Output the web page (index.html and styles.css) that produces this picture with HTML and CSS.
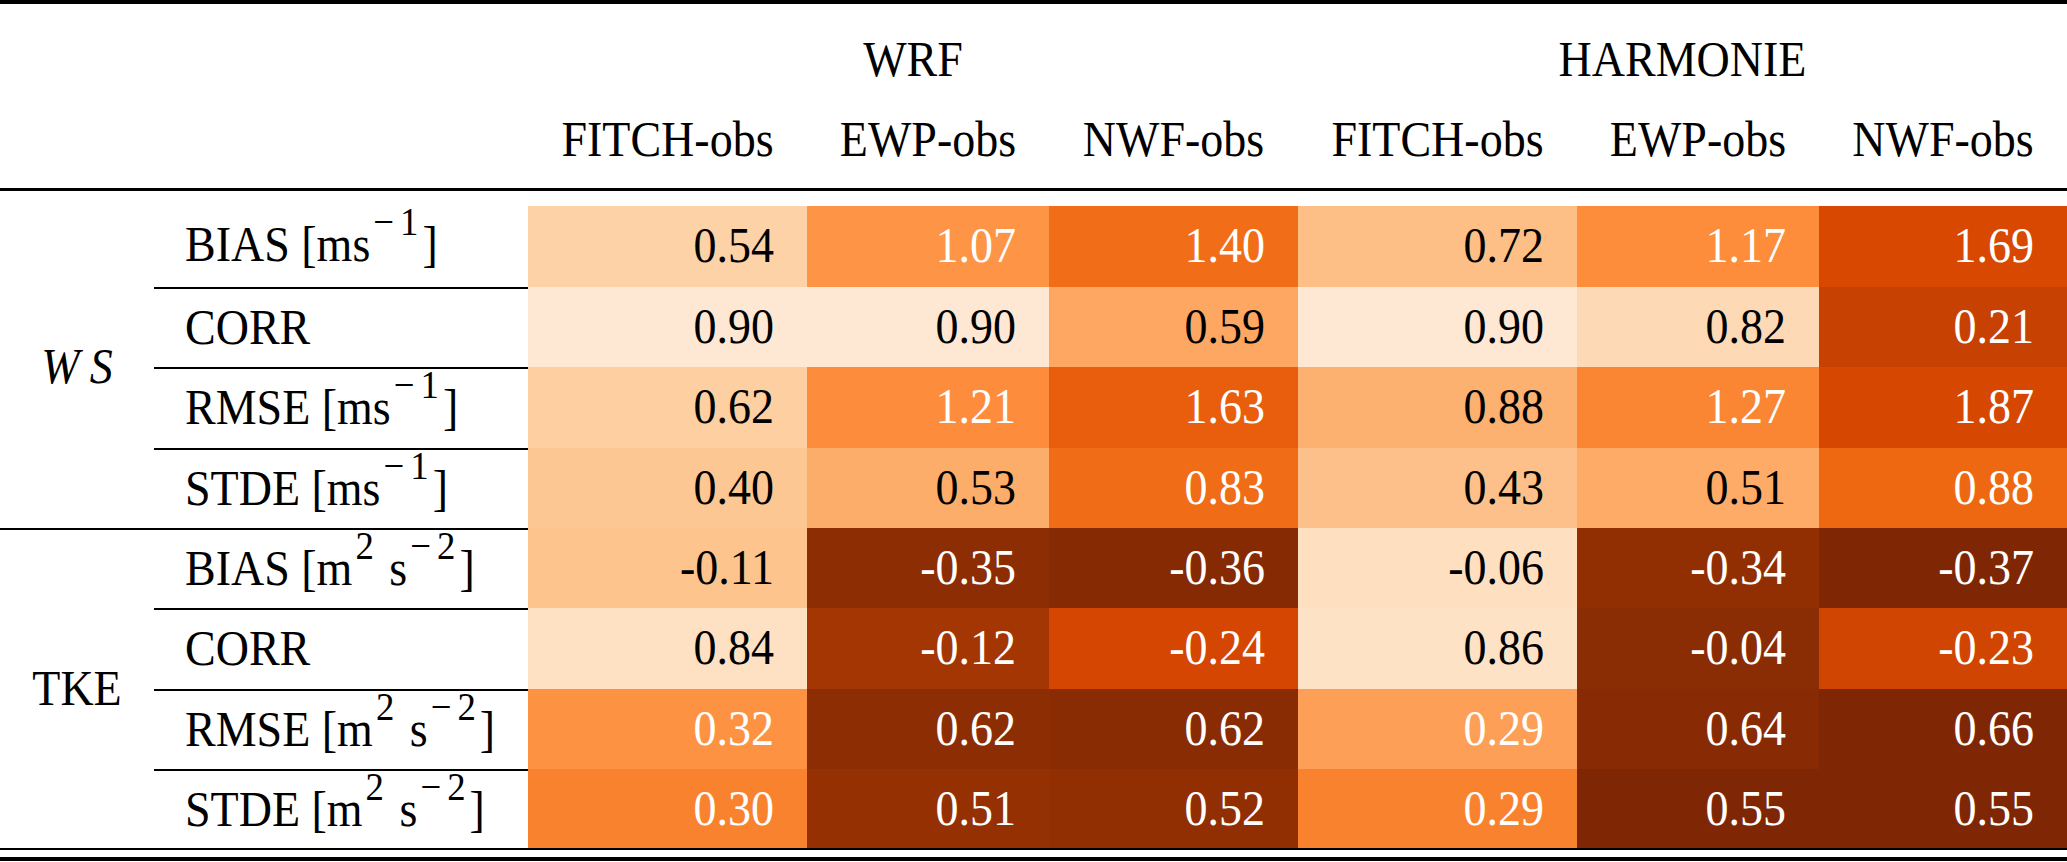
FILE: index.html
```html
<!DOCTYPE html>
<html lang="en">
<head>
<meta charset="utf-8">
<title>WRF / HARMONIE statistics</title>
<link rel="stylesheet" href="styles.css">
</head>
<body>
<div class="table">
  <div class="rule rule-top"></div>

  <div class="grid head">
    <div class="span2"></div>
    <div class="group-head span3"><span class="t">WRF</span></div>
    <div class="group-head span3"><span class="t">HARMONIE</span></div>
    <div class="span2"></div>
    <div class="sub-head"><span class="t">FITCH-obs</span></div>
    <div class="sub-head"><span class="t">EWP-obs</span></div>
    <div class="sub-head"><span class="t">NWF-obs</span></div>
    <div class="sub-head"><span class="t">FITCH-obs</span></div>
    <div class="sub-head"><span class="t">EWP-obs</span></div>
    <div class="sub-head"><span class="t">NWF-obs</span></div>
  </div>

  <div class="rule rule-mid"></div>

  <div class="grid body">
    <div class="group ws"><span class="t"><i>W</i><i class="s">S</i></span></div>
    <div class="metric"><span class="t">BIAS [ms<sup><span class="mn">−</span>1</sup>]</span></div>
    <div class="cell" style="background:#fdd2a6"><span class="t">0.54</span></div>
    <div class="cell w" style="background:#fd9446"><span class="t">1.07</span></div>
    <div class="cell w" style="background:#f26d17"><span class="t">1.40</span></div>
    <div class="cell" style="background:#fdbf86"><span class="t">0.72</span></div>
    <div class="cell w" style="background:#fd8c3b"><span class="t">1.17</span></div>
    <div class="cell w" style="background:#d94801"><span class="t">1.69</span></div>

    <div class="metric cm"><span class="t">CORR</span></div>
    <div class="cell" style="background:#fee8d4"><span class="t">0.90</span></div>
    <div class="cell" style="background:#fee8d4"><span class="t">0.90</span></div>
    <div class="cell" style="background:#fda762"><span class="t">0.59</span></div>
    <div class="cell" style="background:#fee8d4"><span class="t">0.90</span></div>
    <div class="cell" style="background:#fdd9b5"><span class="t">0.82</span></div>
    <div class="cell w" style="background:#c64102"><span class="t">0.21</span></div>

    <div class="metric cm"><span class="t">RMSE [ms<sup><span class="mn">−</span>1</sup>]</span></div>
    <div class="cell" style="background:#fdcfa1"><span class="t">0.62</span></div>
    <div class="cell w" style="background:#fd8d3c"><span class="t">1.21</span></div>
    <div class="cell w" style="background:#e95e0d"><span class="t">1.63</span></div>
    <div class="cell" style="background:#fdb171"><span class="t">0.88</span></div>
    <div class="cell w" style="background:#fa8532"><span class="t">1.27</span></div>
    <div class="cell w" style="background:#d64701"><span class="t">1.87</span></div>

    <div class="metric cm"><span class="t">STDE [ms<sup><span class="mn">−</span>1</sup>]</span></div>
    <div class="cell" style="background:#fdc793"><span class="t">0.40</span></div>
    <div class="cell" style="background:#fdad6a"><span class="t">0.53</span></div>
    <div class="cell w" style="background:#f06c16"><span class="t">0.83</span></div>
    <div class="cell" style="background:#fdc08a"><span class="t">0.43</span></div>
    <div class="cell" style="background:#fdab67"><span class="t">0.51</span></div>
    <div class="cell w" style="background:#ee6812"><span class="t">0.88</span></div>

    <div class="group tke"><span class="t">TKE</span></div>
    <div class="metric gm"><span class="t">BIAS [m<sup>2</sup> s<sup><span class="mn">−</span>2</sup>]</span></div>
    <div class="cell" style="background:#fdc48e"><span class="t">-0.11</span></div>
    <div class="cell w" style="background:#8c2d04"><span class="t">-0.35</span></div>
    <div class="cell w" style="background:#862a04"><span class="t">-0.36</span></div>
    <div class="cell" style="background:#fee0c1"><span class="t">-0.06</span></div>
    <div class="cell w" style="background:#912f03"><span class="t">-0.34</span></div>
    <div class="cell w" style="background:#7f2704"><span class="t">-0.37</span></div>

    <div class="metric cm"><span class="t">CORR</span></div>
    <div class="cell" style="background:#fee1c3"><span class="t">0.84</span></div>
    <div class="cell w" style="background:#a33603"><span class="t">-0.12</span></div>
    <div class="cell w" style="background:#d44602"><span class="t">-0.24</span></div>
    <div class="cell" style="background:#fee2c6"><span class="t">0.86</span></div>
    <div class="cell w" style="background:#8a2c04"><span class="t">-0.04</span></div>
    <div class="cell w" style="background:#d04501"><span class="t">-0.23</span></div>

    <div class="metric cm"><span class="t">RMSE [m<sup>2</sup> s<sup><span class="mn">−</span>2</sup>]</span></div>
    <div class="cell w" style="background:#fd9243"><span class="t">0.32</span></div>
    <div class="cell w" style="background:#8c2d04"><span class="t">0.62</span></div>
    <div class="cell w" style="background:#892c04"><span class="t">0.62</span></div>
    <div class="cell w" style="background:#fd9f56"><span class="t">0.29</span></div>
    <div class="cell w" style="background:#882b04"><span class="t">0.64</span></div>
    <div class="cell w" style="background:#7f2704"><span class="t">0.66</span></div>

    <div class="metric cm"><span class="t">STDE [m<sup>2</sup> s<sup><span class="mn">−</span>2</sup>]</span></div>
    <div class="cell w" style="background:#f9822f"><span class="t">0.30</span></div>
    <div class="cell w" style="background:#953003"><span class="t">0.51</span></div>
    <div class="cell w" style="background:#912f03"><span class="t">0.52</span></div>
    <div class="cell w" style="background:#f9822f"><span class="t">0.29</span></div>
    <div class="cell w" style="background:#7f2704"><span class="t">0.55</span></div>
    <div class="cell w" style="background:#7f2704"><span class="t">0.55</span></div>
  </div>

  <div class="rule rule-bottom-thin"></div>
  <div class="rule rule-bottom-thick"></div>
</div>
</body>
</html>
```

FILE: styles.css
```css
html, body {
  margin: 0;
  padding: 0;
  background: #ffffff;
}

.table {
  width: 2067px;
  font-family: "Liberation Serif", "Times New Roman", serif;
  font-size: 46px;
  color: #000000;
}

.t {
  display: inline-block;
  transform: scaleY(1.08);
  transform-origin: 50% 55%;
}

.rule {
  background: #000000;
  width: 100%;
}

.rule-top {
  height: 4px;
}

.rule-mid {
  height: 3px;
  margin-top: 8px;
}

.rule-bottom-thin {
  height: 2px;
}

.rule-bottom-thick {
  height: 4px;
  margin-top: 7px;
}

.grid {
  display: grid;
  grid-template-columns: 154px 374px 279px 242px 249px 279px 242px 248px;
}

.head {
  margin-top: 16px;
  grid-template-rows: 80px 80px;
  line-height: 80px;
}

.span2 {
  grid-column: span 2;
}

.span3 {
  grid-column: span 3;
}

.group-head,
.sub-head {
  text-align: center;
  white-space: nowrap;
}

.body {
  margin-top: 15px;
  grid-template-rows: 81px 80px 81px 80px 80px 81px 80px 79px;
  line-height: 78px;
}

.group {
  grid-row: span 4;
  display: flex;
  align-items: center;
  justify-content: center;
  box-sizing: border-box;
}

.ws .s {
  margin-left: 10px;
}

.tke {
  border-top: 2px solid #000000;
}

.metric {
  padding-left: 31px;
  white-space: nowrap;
  box-sizing: border-box;
}

.cm,
.gm {
  border-top: 2px solid #000000;
}

.metric sup {
  font-size: 0.8em;
  vertical-align: 0.66em;
  line-height: 0;
  margin-left: 3px;
  margin-right: 4px;
}

.metric sup .mn {
  margin-right: 6px;
}

.cell {
  text-align: right;
  padding-right: 33px;
  white-space: nowrap;
  line-height: 80px;
}

.cell.w {
  color: #ffffff;
}
```
